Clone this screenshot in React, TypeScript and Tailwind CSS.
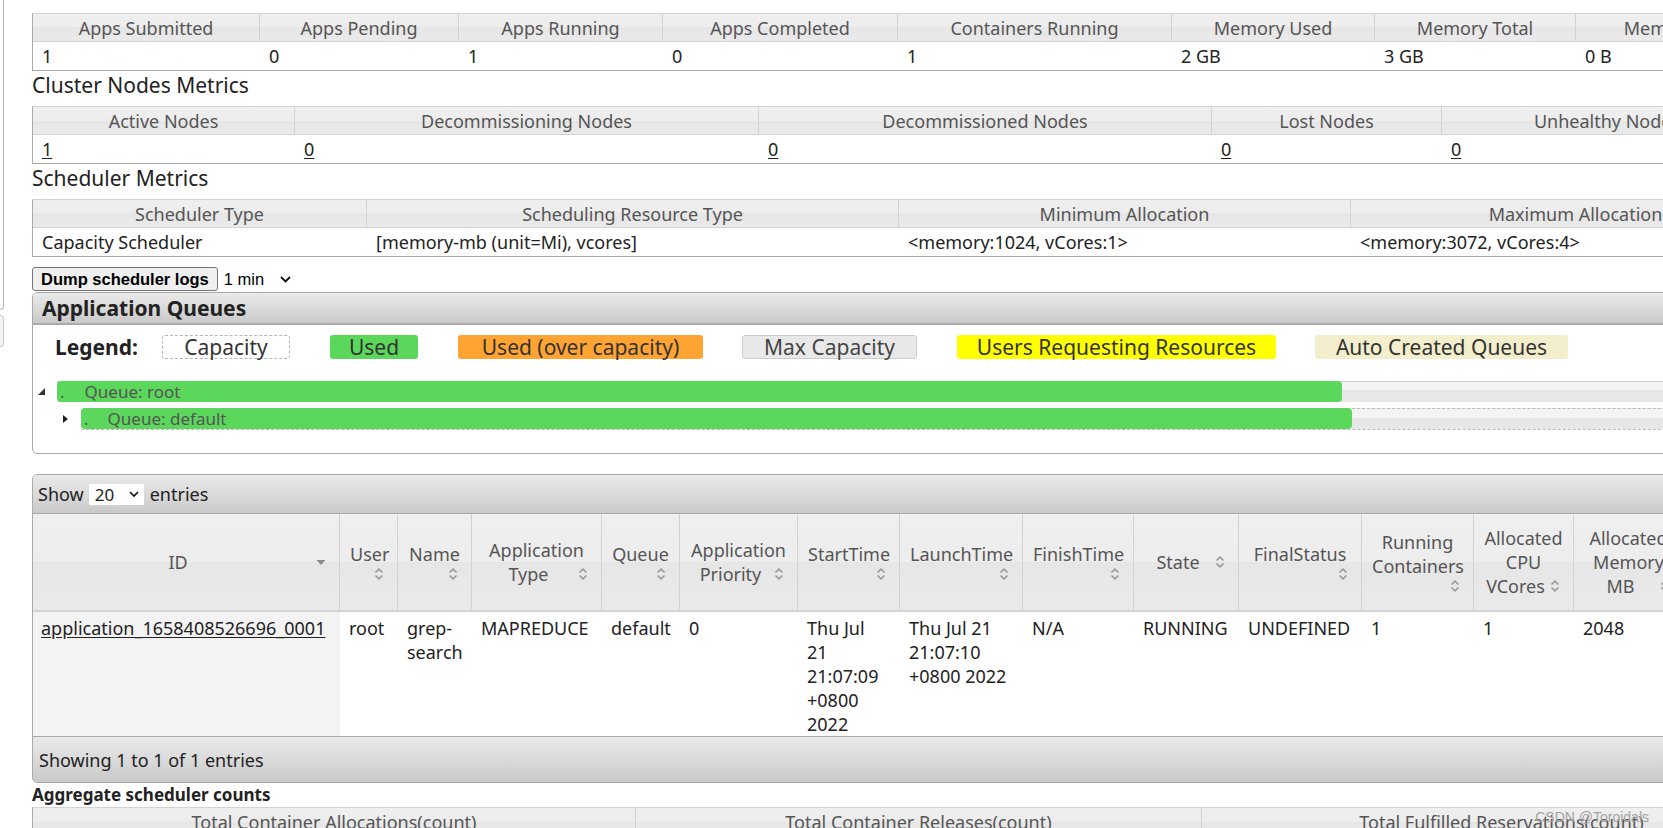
import React from "react";

const headBg =
  "bg-[linear-gradient(180deg,#efefef_0%,#ededed_50%,#e6e6e6_50%,#eaeaea_100%)]";

function SortIcon() {
  return (
    <svg width="16" height="16" viewBox="0 0 16 16" className="shrink-0">
      <path d="M4.5 6.5L8 3.2L11.5 6.5" fill="none" stroke="#9a9a9a" strokeWidth="1.7" />
      <path d="M4.5 9.5L8 12.8L11.5 9.5" fill="none" stroke="#9a9a9a" strokeWidth="1.7" />
    </svg>
  );
}

function SortDesc() {
  return (
    <svg width="16" height="16" viewBox="0 0 16 16" className="shrink-0">
      <path d="M3.5 6H12.5L8 11Z" fill="#8c8c8c" />
    </svg>
  );
}

function InfoTable({
  cols,
  headers,
  values,
  underline,
}: {
  cols: string;
  headers: string[];
  values: string[];
  underline?: boolean;
}) {
  return (
    <div className="w-max border-l border-b border-[#aaaaaa] border-t border-t-[#d3d3d3]">
      <div className={cols}>
        {headers.map((h, i) => (
          <div
            key={"h" + i}
            className={`h-[28px] border-r border-b border-[#d3d3d3] flex items-center justify-center whitespace-nowrap text-[#555555] ${headBg}`}
          >
            {h}
          </div>
        ))}
        {values.map((v, i) => (
          <div key={"v" + i} className="h-[28px] flex items-center pl-[9px] whitespace-nowrap text-[#222222]">
            {underline ? <span className="underline underline-offset-2">{v}</span> : v}
          </div>
        ))}
      </div>
    </div>
  );
}

type H = { lines: string[]; mode: "inline" | "below"; desc?: boolean };

const appHeaders: H[] = [
  { lines: ["ID"], mode: "inline", desc: true },
  { lines: ["User"], mode: "below" },
  { lines: ["Name"], mode: "below" },
  { lines: ["Application", "Type"], mode: "inline" },
  { lines: ["Queue"], mode: "below" },
  { lines: ["Application", "Priority"], mode: "inline" },
  { lines: ["StartTime"], mode: "below" },
  { lines: ["LaunchTime"], mode: "below" },
  { lines: ["FinishTime"], mode: "below" },
  { lines: ["State"], mode: "inline" },
  { lines: ["FinalStatus"], mode: "below" },
  { lines: ["Running", "Containers"], mode: "below" },
  { lines: ["Allocated", "CPU", "VCores"], mode: "inline" },
  { lines: ["Allocated", "Memory", "MB"], mode: "inline" },
  { lines: ["Reserved", "CPU", "VCores"], mode: "inline" },
];

function HeadCell({ h }: { h: H }) {
  return (
    <div className={`h-[96px] border-r border-[#d3d3d3] px-[10px] flex flex-col justify-center text-[#555555] ${headBg}`}>
      {h.lines.map((l, i) => {
        const last = i === h.lines.length - 1;
        if (last && h.mode === "inline") {
          return (
            <div key={i} className="flex items-center">
              <span className="flex-1 text-center whitespace-nowrap">{l}</span>
              {h.desc ? <SortDesc /> : <SortIcon />}
            </div>
          );
        }
        return (
          <div key={i} className="text-center whitespace-nowrap">
            {l}
          </div>
        );
      })}
      {h.mode === "below" && (
        <div className="flex justify-end">
          <SortIcon />
        </div>
      )}
    </div>
  );
}

function DataCell({ lines }: { lines: string[] }) {
  return (
    <div className="h-[124px] pl-[9px] pt-[4px] text-[#222222]">
      {lines.map((l, i) => (
        <div key={i} className="whitespace-nowrap">
          {l}
        </div>
      ))}
    </div>
  );
}

const barBg = "bg-[linear-gradient(180deg,#e9e9e9_0%,#dcdcdc_45%,#c9c9c9_100%)]";

export default function App() {
  return (
    <div className="relative w-[1663px] h-[828px] overflow-hidden bg-white flex font-['Noto_Sans',sans-serif] text-[18px] leading-[24px] text-[#222222]">
      {/* left nav remnant */}
      <div className="w-[4px] shrink-0 flex flex-col">
        <div className="h-[310px] border-r border-b border-[#b5b5b5] rounded-br-[6px]" />
        <div className="mt-[5px] h-[32px] border border-l-0 border-[#c8c8c8] rounded-r-[6px] bg-[#f4f4f4]" />
      </div>

      <div className="ml-[28px] w-[1800px] shrink-0 pt-[13px]">
        <InfoTable
          cols="grid grid-cols-[227px_199px_204px_235px_274px_203px_201px_250px]"
          headers={[
            "Apps Submitted",
            "Apps Pending",
            "Apps Running",
            "Apps Completed",
            "Containers Running",
            "Memory Used",
            "Memory Total",
            "Memory Reserved",
          ]}
          values={["1", "0", "1", "0", "1", "2 GB", "3 GB", "0 B"]}
        />
        <div className="h-[35px] text-[21px] leading-[28px] text-[#222222]">Cluster Nodes Metrics</div>
        <InfoTable
          cols="grid grid-cols-[262px_464px_453px_230px_331px]"
          headers={["Active Nodes", "Decommissioning Nodes", "Decommissioned Nodes", "Lost Nodes", "Unhealthy Nodes"]}
          values={["1", "0", "0", "0", "0"]}
          underline
        />
        <div className="h-[35px] text-[21px] leading-[28px] text-[#222222]">Scheduler Metrics</div>
        <InfoTable
          cols="grid grid-cols-[334px_532px_452px_450px]"
          headers={["Scheduler Type", "Scheduling Resource Type", "Minimum Allocation", "Maximum Allocation"]}
          values={[
            "Capacity Scheduler",
            "[memory-mb (unit=Mi), vcores]",
            "<memory:1024, vCores:1>",
            "<memory:3072, vCores:4>",
          ]}
        />

        {/* dump button row */}
        <div className="mt-[10px] flex items-center h-[24px]">
          <button className="h-[24px] px-[8px] border border-[#767676] rounded-[3px] bg-[#efefef] font-['Liberation_Sans',Arial,sans-serif] font-bold text-[16.5px] leading-[20px] text-black">
            Dump scheduler logs
          </button>
          <div className="ml-[6px] flex items-center font-['Liberation_Sans',Arial,sans-serif] text-[16.5px] text-black">
            <span>1 min</span>
            <svg width="11" height="7" viewBox="0 0 11 7" className="ml-[16px]">
              <path d="M1 1L5.5 5.5L10 1" fill="none" stroke="#111" strokeWidth="1.8" />
            </svg>
          </div>
        </div>

        {/* Application Queues panel */}
        <div className="mt-[1px] w-[1760px] border border-[#aaaaaa] rounded-[5px]">
          <div className={`h-[32px] border-b-2 border-[#aaaaaa] rounded-t-[4px] flex items-center pl-[9px] font-bold text-[21px] leading-[28px] text-[#222222] ${barBg}`}>
            Application Queues
          </div>
          <div className="pt-[10px] pb-[23px]">
            <div className="flex items-center h-[24px] pl-[22px] text-[21px] leading-[24px] text-[#333333]">
              <div className="w-[88px] font-bold text-[#222222]">Legend:</div>
              <div className="ml-[19px] w-[128px] h-[24px] border border-dashed border-[#b5b5b5] rounded-[3px] bg-white flex items-center justify-center">
                Capacity
              </div>
              <div className="ml-[40px] w-[88px] h-[24px] rounded-[3px] bg-[#5bd75b] flex items-center justify-center">
                Used
              </div>
              <div className="ml-[40px] w-[245px] h-[24px] rounded-[3px] bg-[#ffa333] flex items-center justify-center">
                Used (over capacity)
              </div>
              <div className="ml-[39px] w-[175px] h-[24px] rounded-[3px] bg-[#e8e8e8] border border-[#cccccc] flex items-center justify-center text-[#444444]">
                Max Capacity
              </div>
              <div className="ml-[40px] w-[319px] h-[24px] rounded-[3px] bg-[#ffff00] flex items-center justify-center">
                Users Requesting Resources
              </div>
              <div className="ml-[39px] w-[253px] h-[24px] rounded-[3px] bg-[#f3eecb] flex items-center justify-center">
                Auto Created Queues
              </div>
            </div>

            {/* root queue */}
            <div className="flex items-center h-[21px] mt-[22px]">
              <div className="w-[5px] shrink-0" />
              <svg width="7" height="7" viewBox="0 0 7 7" className="shrink-0">
                <path d="M7 0V7H0Z" fill="#333" />
              </svg>
              <div className="w-[12px] shrink-0" />
              <div className="flex-1 h-[21px] flex bg-[linear-gradient(180deg,#cfcfcf_0,#cfcfcf_1px,#f4f4f4_1px,#f4f4f4_45%,#e7e7e7_45%,#e7e7e7_100%)]">
                <div className="w-[1285px] h-[21px] shrink-0 bg-[#5bd75b] rounded-[4px] flex items-center text-[17px] leading-[21px] text-[#555555]">
                  <span className="ml-[3px]">.</span>
                  <span className="ml-[20px]">Queue: root</span>
                </div>
              </div>
            </div>

            {/* default queue */}
            <div className="flex items-center h-[22px] mt-[6px]">
              <div className="w-[30px] shrink-0" />
              <svg width="5" height="8" viewBox="0 0 5 8" className="shrink-0">
                <path d="M0 0L5 4L0 8Z" fill="#222" />
              </svg>
              <div className="w-[13px] shrink-0" />
              <div className="flex-1 h-[22px] flex border-b border-dashed border-[#bbbbbb]">
                <div className="w-[1271px] h-[21px] shrink-0 bg-[#5bd75b] rounded-[4px] flex items-center text-[17px] leading-[21px] text-[#555555]">
                  <span className="ml-[3px]">.</span>
                  <span className="ml-[19px]">Queue: default</span>
                </div>
                <div className="flex-1 h-[21px] border-t border-dashed border-[#bbbbbb] bg-[linear-gradient(180deg,#f4f4f4_0%,#f4f4f4_45%,#e7e7e7_45%,#e7e7e7_100%)]" />
              </div>
            </div>
          </div>
        </div>

        {/* Applications table */}
        <div className="mt-[20px] w-[1760px] border border-[#aaaaaa] rounded-[5px] overflow-hidden">
          <div className={`h-[39px] border-b border-[#aaaaaa] flex items-center pl-[5px] text-[#222222] ${barBg}`}>
            <span>Show</span>
            <div className="ml-[5px] w-[55px] h-[21px] bg-white flex items-center justify-between pl-[6px] pr-[5px]">
              <span className="text-[17px] leading-[21px]">20</span>
              <svg width="10" height="6" viewBox="0 0 10 6">
                <path d="M1 1L5 5L9 1" fill="none" stroke="#111" strokeWidth="1.7" />
              </svg>
            </div>
            <span className="ml-[6px]">entries</span>
          </div>

          <div className="grid grid-cols-[307px_58px_74px_130px_78px_118px_102px_123px_111px_105px_123px_112px_100px_110px_110px] border-b-2 border-[#d3d3d3]">
            {appHeaders.map((h, i) => (
              <HeadCell key={i} h={h} />
            ))}
          </div>

          <div className="grid grid-cols-[307px_58px_74px_130px_78px_118px_102px_123px_111px_105px_123px_112px_100px_110px_110px]">
            <div className="h-[124px] bg-[#f3f3f3] pl-[8px] pt-[4px]">
              <span className="underline underline-offset-2 whitespace-nowrap text-[#222222]">application_1658408526696_0001</span>
            </div>
            <DataCell lines={["root"]} />
            <DataCell lines={["grep-", "search"]} />
            <DataCell lines={["MAPREDUCE"]} />
            <DataCell lines={["default"]} />
            <DataCell lines={["0"]} />
            <DataCell lines={["Thu Jul", "21", "21:07:09", "+0800", "2022"]} />
            <DataCell lines={["Thu Jul 21", "21:07:10", "+0800 2022"]} />
            <DataCell lines={["N/A"]} />
            <DataCell lines={["RUNNING"]} />
            <DataCell lines={["UNDEFINED"]} />
            <DataCell lines={["1"]} />
            <DataCell lines={["1"]} />
            <DataCell lines={["2048"]} />
            <DataCell lines={["0"]} />
          </div>

          <div className={`h-[46px] border-t border-[#aaaaaa] flex items-center pl-[6px] text-[#222222] ${barBg}`}>
            Showing 1 to 1 of 1 entries
          </div>
        </div>

        <div className="h-[24px] text-[17px] leading-[24px] font-bold text-[#222222]">Aggregate scheduler counts</div>
        <div className="w-max border-l border-[#aaaaaa] border-t border-t-[#d3d3d3]">
          <div className="grid grid-cols-[603px_566px_600px]">
            {[
              "Total Container Allocations(count)",
              "Total Container Releases(count)",
              "Total Fulfilled Reservations(count)",
            ].map((h, i) => (
              <div
                key={i}
                className={`h-[28px] border-r border-b border-[#d3d3d3] flex items-center justify-center whitespace-nowrap text-[#555555] ${headBg}`}
              >
                {h}
              </div>
            ))}
          </div>
        </div>
      </div>

      <div className="absolute right-[14px] bottom-[2px] font-['Liberation_Sans',Arial,sans-serif] text-[14px] leading-[18px] text-[#a3a3a3]">
        CSDN @Toroidals
      </div>
    </div>
  );
}
